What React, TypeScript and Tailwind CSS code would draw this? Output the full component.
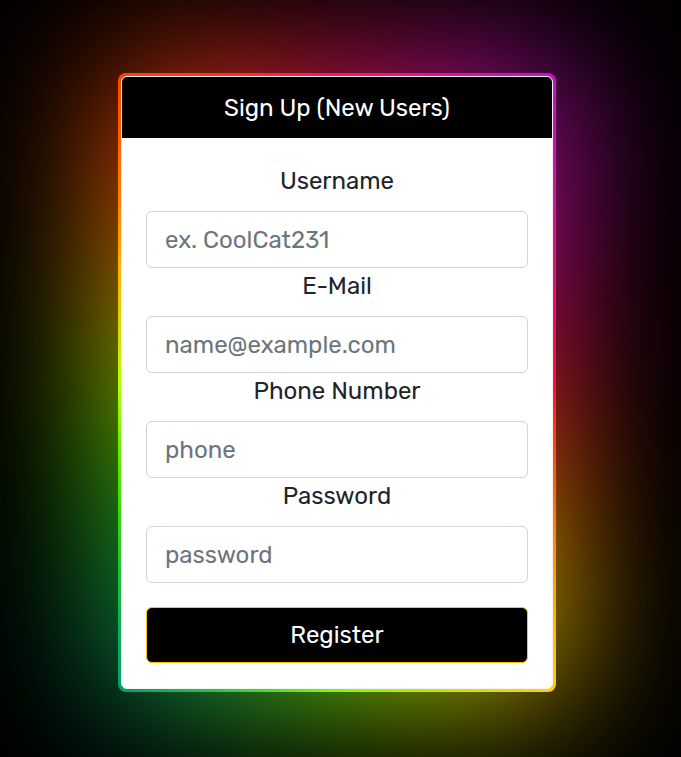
const ring =
  "bg-[conic-gradient(from_0deg,#ff1458_0deg,#c810c8_35deg,#ff1030_90deg,#ff7a00_122deg,#ffd200_145deg,#7cff00_180deg,#00a070_215deg,#3ee000_242deg,#b4ff00_270deg,#ffb000_298deg,#ff4400_325deg,#ff1458_360deg)]";

const fields = [
  { label: "Username", type: "text", placeholder: "ex. CoolCat231" },
  { label: "E-Mail", type: "email", placeholder: "name@example.com" },
  { label: "Phone Number", type: "tel", placeholder: "phone" },
  { label: "Password", type: "password", placeholder: "password" },
];

export default function App() {
  return (
    <div className="min-h-[757px] bg-black flex justify-center pt-[73px] pr-[7px] font-['Rubik','Inter','Noto_Sans',sans-serif] overflow-hidden">
      <div className="relative w-[438px] h-[619px]">
        {/* glow */}
        <div className={`absolute -inset-[16px] rounded-[30px] blur-[70px] opacity-80 ${ring}`} />
        <div className={`relative rounded-[8px] p-[3px] ${ring}`}>
          <div className="bg-white rounded-[6px] border border-[#f2f2f2] overflow-hidden">
            <div className="h-[61px] bg-black flex items-center justify-center text-white text-[24px]">
              Sign Up (New Users)
            </div>
            <form className="px-[24px] pt-[25px] pb-[25px]" onSubmit={(e) => e.preventDefault()}>
              {fields.map((f) => (
                <div key={f.label}>
                  <label className="block text-center text-[24px] leading-[36px] mb-[12px] text-[#212529]">
                    {f.label}
                  </label>
                  <input
                    type={f.type}
                    placeholder={f.placeholder}
                    className="block w-full h-[57px] px-[18px] rounded-[6px] border border-[#ced4da] text-[24px] text-[#212529] placeholder:text-[#6c757d] outline-none"
                  />
                </div>
              ))}
              <button
                type="submit"
                className="mt-[24px] w-full h-[56px] rounded-[6px] bg-black border border-[#ffc107] text-white text-[24px]"
              >
                Register
              </button>
            </form>
          </div>
        </div>
      </div>
    </div>
  );
}
